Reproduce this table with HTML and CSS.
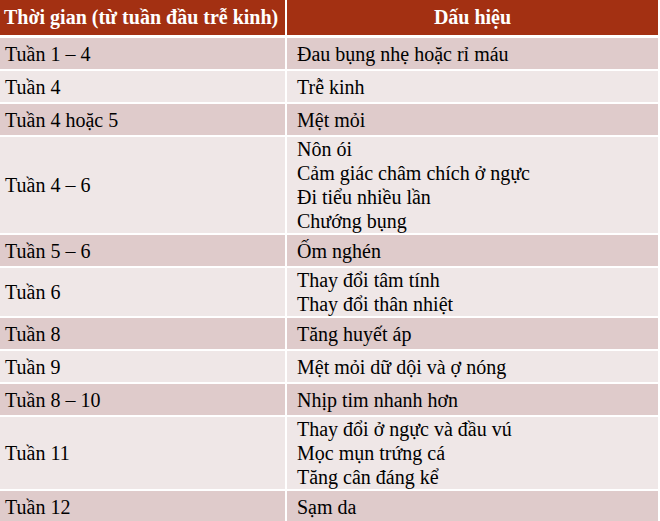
FILE: index.html
```html
<!DOCTYPE html>
<html>
<head>
<meta charset="utf-8">
<title>Table</title>
<link rel="stylesheet" href="styles.css">
</head>
<body>
<table class="signs">
  <thead>
    <tr>
      <th class="c1">Thời gian (từ tuần đầu trễ kinh)</th>
      <th class="c2">Dấu hiệu</th>
    </tr>
  </thead>
  <tbody>
    <tr class="dark"><td class="c1">Tuần 1 – 4</td><td class="c2">Đau bụng nhẹ hoặc rỉ máu</td></tr>
    <tr class="light"><td class="c1">Tuần 4</td><td class="c2">Trễ kinh</td></tr>
    <tr class="dark"><td class="c1">Tuần 4 hoặc 5</td><td class="c2">Mệt mỏi</td></tr>
    <tr class="light"><td class="c1">Tuần 4 – 6</td><td class="c2">Nôn ói<br>Cảm giác châm chích ở ngực<br>Đi tiểu nhiều lần<br>Chướng bụng</td></tr>
    <tr class="dark"><td class="c1">Tuần 5 – 6</td><td class="c2">Ốm nghén</td></tr>
    <tr class="light"><td class="c1">Tuần 6</td><td class="c2">Thay đổi tâm tính<br>Thay đổi thân nhiệt</td></tr>
    <tr class="dark"><td class="c1">Tuần 8</td><td class="c2">Tăng huyết áp</td></tr>
    <tr class="light"><td class="c1">Tuần 9</td><td class="c2">Mệt mỏi dữ dội và ợ nóng</td></tr>
    <tr class="dark"><td class="c1">Tuần 8 – 10</td><td class="c2">Nhịp tim nhanh hơn</td></tr>
    <tr class="light"><td class="c1">Tuần 11</td><td class="c2">Thay đổi ở ngực và đầu vú<br>Mọc mụn trứng cá<br>Tăng cân đáng kể</td></tr>
    <tr class="dark"><td class="c1">Tuần 12</td><td class="c2">Sạm da</td></tr>
  </tbody>
</table>
</body>
</html>
```

FILE: styles.css
```css
html, body {
  margin: 0;
  padding: 0;
  background: #ffffff;
}

.signs {
  border-collapse: separate;
  border-spacing: 0;
  width: 658px;
  table-layout: fixed;
  font-family: "Liberation Serif", serif;
  font-size: 20px;
  color: #000000;
}

.signs th,
.signs td {
  font-family: "Liberation Serif", serif;
  font-size: 20px;
  padding: 0;
  vertical-align: middle;
}

.signs th {
  background: #a33012;
  color: #ffffff;
  font-weight: bold;
  height: 35px;
  border-bottom: 3px solid #ffffff;
}

.signs th.c1 {
  text-align: left;
  padding-left: 4px;
}

.signs th.c2 {
  text-align: center;
}

.signs .c1 {
  width: 287px;
  box-sizing: border-box;
  border-right: 2px solid #ffffff;
}

.signs td {
  line-height: 24px;
  height: 31px;
  border-top: 2px solid #ffffff;
  text-align: left;
}

.signs tbody tr:first-child td {
  border-top: 0;
}

.signs td.c1 {
  padding-left: 5px;
}

.signs td.c2 {
  padding-left: 10px;
}

.signs .dark td {
  background: #dfcbcb;
}

.signs .light td {
  background: #efe7e7;
}
```
